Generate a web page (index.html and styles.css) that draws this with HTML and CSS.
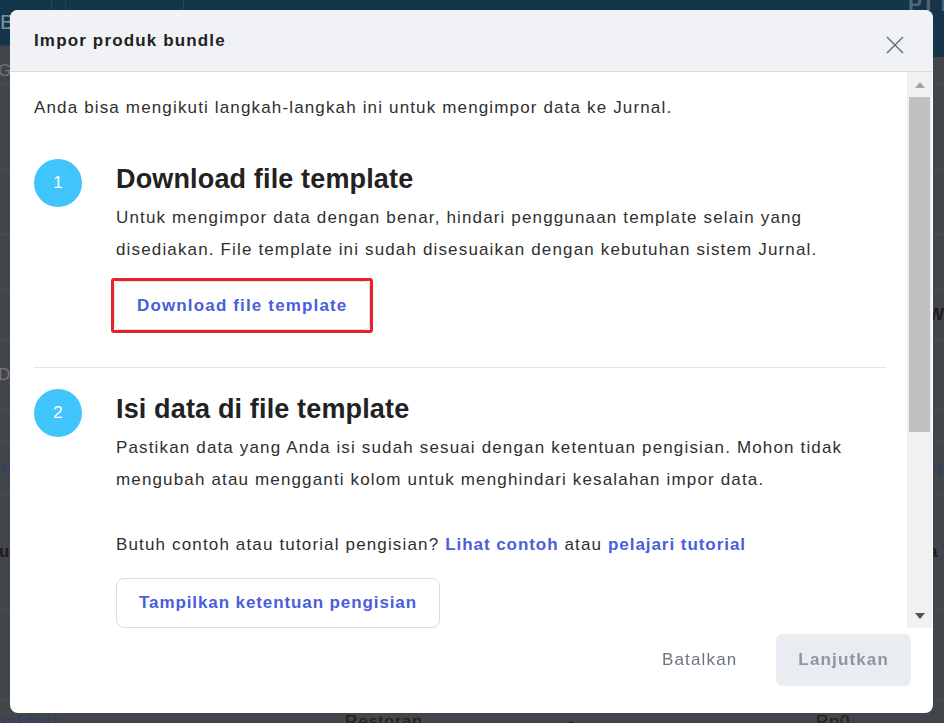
FILE: index.html
```html
<!DOCTYPE html>
<html lang="id">
<head>
<meta charset="utf-8">
<title>Impor produk bundle</title>
<link rel="stylesheet" href="styles.css">
</head>
<body>
<div class="app">
  <div class="topbar">
    <div class="brand">B</div>
    <div class="nav-cell nav-small"></div>
    <div class="nav-cell nav-wide"></div>
    <div class="nav-fill"></div>
    <div class="company">PT Indo</div>
  </div>
  <div class="subbar"><div class="subbar-fill"></div><div class="subbar-navy"></div></div>
  <div class="row r1"><span class="t-grey ind-4">Gudang</span><span></span><span></span><span></span><span></span></div>
  <div class="row r2"><span></span><span></span><span></span><span></span><span></span></div>
  <div class="row r3"><span></span><span></span><span></span><span></span><span></span></div>
  <div class="row r4"><span></span><span></span><span></span><span></span><span></span></div>
  <div class="row r5"><span></span><span></span><span></span><span></span><span class="t-dark bold">Warna</span></div>
  <div class="row r6"><span class="t-grey ind-4">Data</span><span></span><span></span><span></span><span></span></div>
  <div class="row r7"><span></span><span></span><span></span><span></span><span></span></div>
  <div class="row r8"><span class="t-blue ind-12">Tur</span><span></span><span></span><span></span><span class="t-blue">sp</span></div>
  <div class="row r9"><span class="t-dark bold ind-40">Produk</span><span></span><span></span><span></span><span class="t-dark bold">a</span></div>
  <div class="row r10"><span></span><span></span><span></span><span></span><span></span></div>
  <div class="row r11"><span class="t-blue ind-22">Breakfast</span><span class="t-dark">Restoran</span><span class="t-dark">-</span><span class="t-dark">Rp0</span><span></span></div>
</div>

<div class="overlay">
  <div class="modal" role="dialog" aria-labelledby="modal-title">
    <div class="modal-header">
      <h2 class="modal-title" id="modal-title">Impor produk bundle</h2>
      <button class="close" aria-label="Tutup">
        <svg width="18" height="18" viewBox="0 0 18 18"><path d="M1 1 L17 17 M17 1 L1 17" stroke="#6b7683" stroke-width="1.6" fill="none"/></svg>
      </button>
    </div>
    <div class="modal-main">
      <div class="modal-body">
        <p class="intro">Anda bisa mengikuti langkah-langkah ini untuk mengimpor data ke Jurnal.</p>

        <div class="step">
          <div class="num">1</div>
          <div class="step-body">
            <h3 class="step-title">Download file template</h3>
            <p class="step-text">Untuk mengimpor data dengan benar, hindari penggunaan template selain yang disediakan. File template ini sudah disesuaikan dengan kebutuhan sistem Jurnal.</p>
            <div class="highlight"><button class="btn-outline">Download file template</button></div>
          </div>
        </div>

        <hr class="divider">

        <div class="step step-2">
          <div class="num">2</div>
          <div class="step-body">
            <h3 class="step-title">Isi data di file template</h3>
            <p class="step-text">Pastikan data yang Anda isi sudah sesuai dengan ketentuan pengisian. Mohon tidak mengubah atau mengganti kolom untuk menghindari kesalahan impor data.</p>
            <p class="step-text hint">Butuh contoh atau tutorial pengisian? <a class="link" href="#">Lihat contoh</a> atau <a class="link" href="#">pelajari tutorial</a></p>
            <button class="btn-outline btn-rules">Tampilkan ketentuan pengisian</button>
          </div>
        </div>
      </div>
      <div class="scrollbar" aria-hidden="true">
        <div class="sb-btn"><span class="arrow-up"></span></div>
        <div class="sb-thumb"></div>
        <div class="sb-track"></div>
        <div class="sb-btn"><span class="arrow-down"></span></div>
      </div>
    </div>
    <div class="modal-footer">
      <button class="btn-text">Batalkan</button>
      <button class="btn-primary" disabled>Lanjutkan</button>
    </div>
  </div>
</div>
</body>
</html>
```

FILE: styles.css
```css
* { box-sizing: border-box; }
html, body { margin: 0; height: 100%; }
body {
  font-family: "Liberation Sans", Arial, sans-serif;
  background: #42464a;
  overflow: hidden;
}

/* ---------- background page (dimmed) ---------- */
.app { width: 944px; height: 723px; display: flex; flex-direction: column; overflow: hidden; }
.topbar { height: 45px; background: #15354a; display: flex; flex-shrink: 0; }
.brand {
  width: 52px; border-right: 1px solid #24455a;
  color: #7b92a3; font-size: 21px; line-height: 1; padding-top: 11px;
}
.nav-cell { border-right: 1px solid #24455a; }
.nav-small { width: 14px; }
.nav-wide { width: 118px; }
.nav-fill { flex: 1; }
.company {
  width: 36px; color: #4f687b; font-size: 21px; font-weight: 700; line-height: 1;
  margin-top: -7px; white-space: nowrap; overflow: hidden;
}
.subbar { height: 12px; display: flex; flex-shrink: 0; }
.subbar-fill { flex: 1; border-top: 1px solid #2b3c48; }
.subbar-navy { width: 120px; background: #15354a; }

.row {
  display: grid;
  grid-template-columns: 345px 223px 248px 112px 1fr;
  align-items: center;
  border-bottom: 1px solid #4c5055;
  font-size: 17px; letter-spacing: 1.1px;
  flex-shrink: 0;
  white-space: nowrap;
  overflow: hidden;
}
.r1 { height: 28px; }
.r2 { height: 85px; }
.r3 { height: 65px; }
.r4 { height: 55px; }
.r5 { height: 50px; }
.r6 { height: 70px; }
.r7 { height: 32px; }
.r8 { height: 53px; }
.r9 { height: 115px; }
.r10 { height: 90px; }
.r11 { height: 44px; }
.t-grey { color: #72767b; }
.t-dark { color: #1c1d1f; }
.t-blue { color: #2f3b6a; }
.bold { font-weight: 700; }
.ind-4 { margin-left: -2px; }
.ind-12 { margin-left: -14px; }
.ind-22 { margin-left: -23px; }
.ind-40 { margin-left: -44px; }

/* ---------- modal ---------- */
.overlay {
  position: fixed; inset: 0;
  padding: 10px 11px 10px 10px;
  display: flex;
}
.modal {
  width: 923px; height: 703px;
  background: #fff;
  border-radius: 8px;
  display: flex; flex-direction: column;
  overflow: hidden;
  color: #2f2f2f;
  font-size: 17px;
  letter-spacing: 1.15px;
}
.modal-header {
  height: 62px; flex-shrink: 0;
  background: #f1f2f6;
  border-bottom: 1px solid #d9dce1;
  display: flex; align-items: center; justify-content: space-between;
  padding: 0 29px 0 24px;
}
.modal-title { margin: 0; font-size: 17px; font-weight: 700; color: #222; }
.close {
  align-self: flex-start; margin-top: 26px;
  width: 18px; height: 18px; padding: 0; border: 0; background: none; display: flex;
}

.modal-main { flex: 1; display: flex; min-height: 0; }
.modal-body { flex: 1; overflow: hidden; padding: 20px 21px 0 24px; }
.intro { margin: 0; line-height: 32px; }

.step { display: flex; gap: 34px; margin-top: 35px; }
.step-2 { margin-top: 21px; }
.num {
  width: 48px; height: 48px; flex-shrink: 0;
  border-radius: 50%;
  background: #41c4fc;
  color: #fff; font-size: 17px; letter-spacing: 0;
  display: flex; align-items: center; justify-content: center;
}
.step-body { flex: 1; min-width: 0; }
.step-title { margin: 0 0 3px; font-size: 27px; line-height: 40px; font-weight: 700; color: #222; letter-spacing: 0.15px; }
.step-text { margin: 0; line-height: 32px; }
.hint { margin-top: 33px; }
.link { color: #4a5edb; font-weight: 700; letter-spacing: 0.95px; text-decoration: none; }

.highlight {
  display: inline-block;
  margin: 12px 0 0 -5px;
  border: 3px solid #e8212b;
  border-radius: 3px;
}
.btn-outline {
  display: block;
  font-family: inherit; font-size: 17px; font-weight: 700; letter-spacing: 1.15px;
  white-space: nowrap;
  color: #4a5edb;
  background: #fff;
  border: 1px solid #d8dce3;
  border-radius: 6px;
  height: 49px; padding: 0 22px;
}
.btn-rules { margin-top: 17px; height: 50px; padding: 0 22px; border-radius: 8px; letter-spacing: 0.9px; }
.divider { border: 0; border-top: 1px solid #e3e5e9; margin: 34px 0 0; }

.scrollbar {
  width: 25px; margin-right: 1px; flex-shrink: 0;
  background: #f1f1f1;
  display: flex; flex-direction: column; align-items: center;
}
.sb-btn { height: 25px; width: 100%; display: flex; align-items: center; justify-content: center; flex-shrink: 0; }
.arrow-up { width: 0; height: 0; border-left: 5.5px solid transparent; border-right: 5.5px solid transparent; border-bottom: 6px solid #a6a6a6; }
.arrow-down { width: 0; height: 0; border-left: 5.5px solid transparent; border-right: 5.5px solid transparent; border-top: 6px solid #505050; }
.sb-thumb { width: 21px; height: 335px; background: #c1c1c1; flex-shrink: 0; }
.sb-track { flex: 1; }

.modal-footer {
  height: 85px; flex-shrink: 0;
  display: flex; justify-content: flex-end; align-items: flex-start;
  gap: 39px;
  padding: 6px 22px 0 0;
}
.btn-text {
  font-family: inherit; font-size: 17px; letter-spacing: 1.15px;
  color: #6b7581; background: none; border: 0; padding: 0;
  height: 52px;
}
.btn-primary {
  font-family: inherit; font-size: 17px; font-weight: 700; letter-spacing: 1.15px;
  color: #8c96a2; background: #e9ecf0;
  border: 0; border-radius: 6px;
  height: 52px; padding: 0 22px;
}
```
